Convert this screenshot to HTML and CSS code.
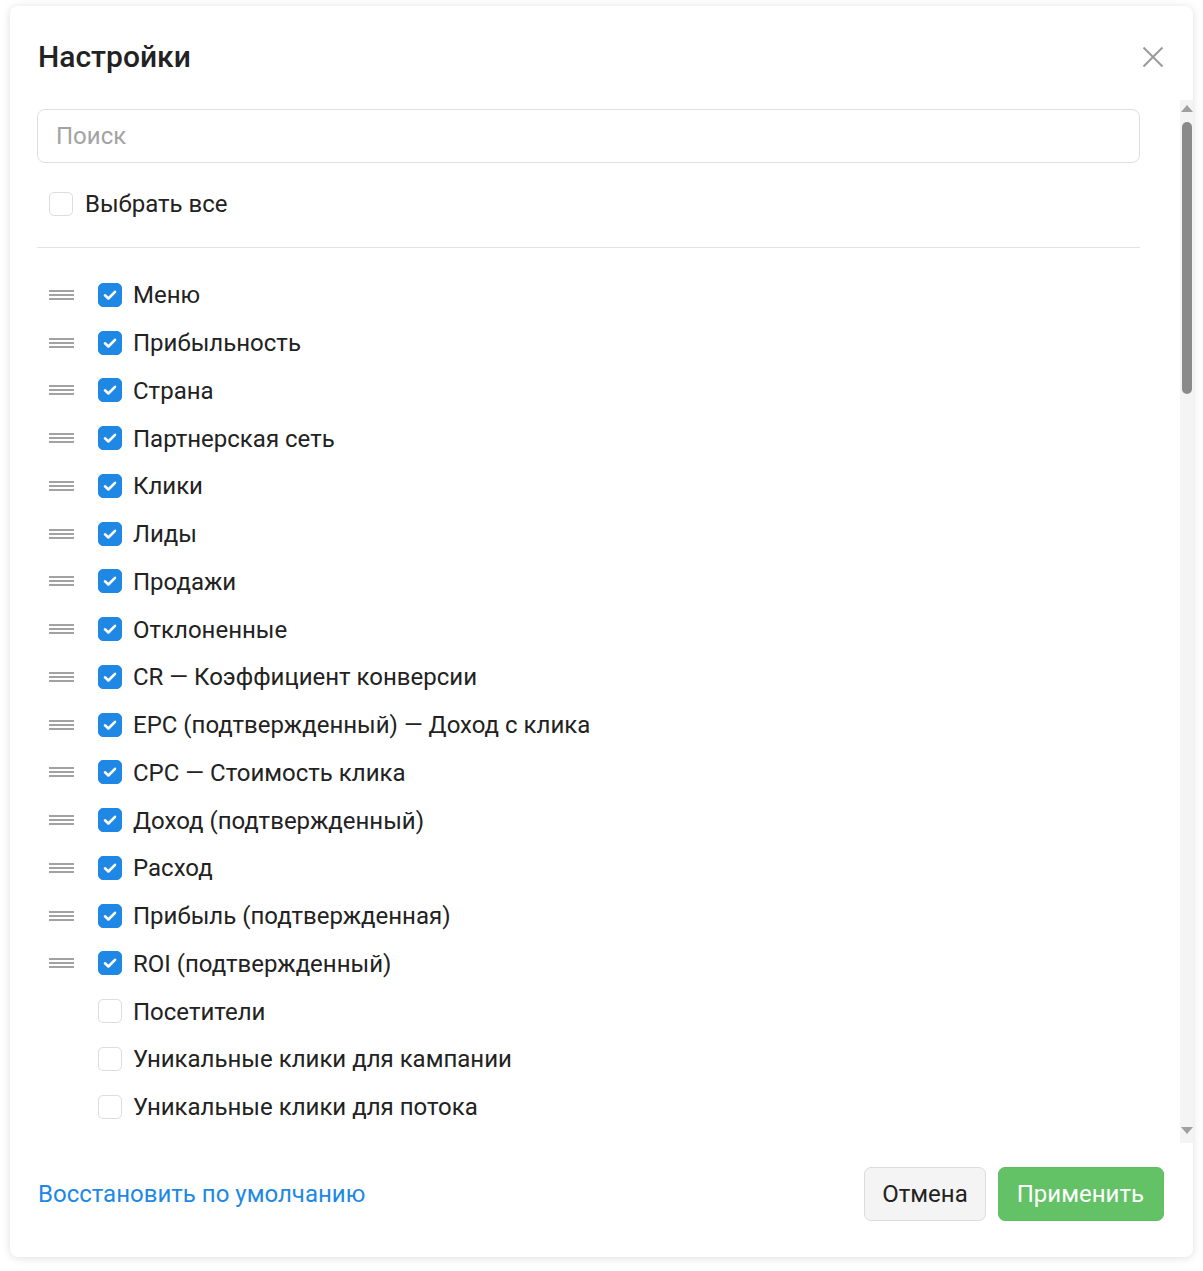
FILE: index.html
```html
<!DOCTYPE html>
<html lang="ru">
<head>
<meta charset="utf-8">
<title>Настройки</title>
<link rel="stylesheet" href="styles.css">
</head>
<body>
<div class="modal">
  <div class="header">
    <h1 class="title">Настройки</h1>
    <button class="close" aria-label="Закрыть">
      <svg width="22" height="22" viewBox="0 0 22 22"><path d="M1.5 1.5 L20.5 20.5 M20.5 1.5 L1.5 20.5" stroke="#9a9a9a" stroke-width="2" fill="none"/></svg>
    </button>
  </div>
  <div class="body">
    <div class="content">
      <div class="search">Поиск</div>
      <label class="select-all">
        <span class="cb"></span>
        <span class="label">Выбрать все</span>
      </label>
      <div class="divider"></div>
      <ul class="list">
        <li class="row"><span class="handle"><i></i><i></i><i></i></span><span class="cb on"><svg viewBox="0 0 24 24"><path d="M7 12.3 L10.4 15.5 L17 8.8" /></svg></span><span class="label">Меню</span></li>
        <li class="row"><span class="handle"><i></i><i></i><i></i></span><span class="cb on"><svg viewBox="0 0 24 24"><path d="M7 12.3 L10.4 15.5 L17 8.8" /></svg></span><span class="label">Прибыльность</span></li>
        <li class="row"><span class="handle"><i></i><i></i><i></i></span><span class="cb on"><svg viewBox="0 0 24 24"><path d="M7 12.3 L10.4 15.5 L17 8.8" /></svg></span><span class="label">Страна</span></li>
        <li class="row"><span class="handle"><i></i><i></i><i></i></span><span class="cb on"><svg viewBox="0 0 24 24"><path d="M7 12.3 L10.4 15.5 L17 8.8" /></svg></span><span class="label">Партнерская сеть</span></li>
        <li class="row"><span class="handle"><i></i><i></i><i></i></span><span class="cb on"><svg viewBox="0 0 24 24"><path d="M7 12.3 L10.4 15.5 L17 8.8" /></svg></span><span class="label">Клики</span></li>
        <li class="row"><span class="handle"><i></i><i></i><i></i></span><span class="cb on"><svg viewBox="0 0 24 24"><path d="M7 12.3 L10.4 15.5 L17 8.8" /></svg></span><span class="label">Лиды</span></li>
        <li class="row"><span class="handle"><i></i><i></i><i></i></span><span class="cb on"><svg viewBox="0 0 24 24"><path d="M7 12.3 L10.4 15.5 L17 8.8" /></svg></span><span class="label">Продажи</span></li>
        <li class="row"><span class="handle"><i></i><i></i><i></i></span><span class="cb on"><svg viewBox="0 0 24 24"><path d="M7 12.3 L10.4 15.5 L17 8.8" /></svg></span><span class="label">Отклоненные</span></li>
        <li class="row"><span class="handle"><i></i><i></i><i></i></span><span class="cb on"><svg viewBox="0 0 24 24"><path d="M7 12.3 L10.4 15.5 L17 8.8" /></svg></span><span class="label">CR — Коэффициент конверсии</span></li>
        <li class="row"><span class="handle"><i></i><i></i><i></i></span><span class="cb on"><svg viewBox="0 0 24 24"><path d="M7 12.3 L10.4 15.5 L17 8.8" /></svg></span><span class="label">EPC (подтвержденный) — Доход с клика</span></li>
        <li class="row"><span class="handle"><i></i><i></i><i></i></span><span class="cb on"><svg viewBox="0 0 24 24"><path d="M7 12.3 L10.4 15.5 L17 8.8" /></svg></span><span class="label">CPC — Стоимость клика</span></li>
        <li class="row"><span class="handle"><i></i><i></i><i></i></span><span class="cb on"><svg viewBox="0 0 24 24"><path d="M7 12.3 L10.4 15.5 L17 8.8" /></svg></span><span class="label">Доход (подтвержденный)</span></li>
        <li class="row"><span class="handle"><i></i><i></i><i></i></span><span class="cb on"><svg viewBox="0 0 24 24"><path d="M7 12.3 L10.4 15.5 L17 8.8" /></svg></span><span class="label">Расход</span></li>
        <li class="row"><span class="handle"><i></i><i></i><i></i></span><span class="cb on"><svg viewBox="0 0 24 24"><path d="M7 12.3 L10.4 15.5 L17 8.8" /></svg></span><span class="label">Прибыль (подтвержденная)</span></li>
        <li class="row"><span class="handle"><i></i><i></i><i></i></span><span class="cb on"><svg viewBox="0 0 24 24"><path d="M7 12.3 L10.4 15.5 L17 8.8" /></svg></span><span class="label">ROI (подтвержденный)</span></li>
        <li class="row"><span class="handle empty"></span><span class="cb"></span><span class="label">Посетители</span></li>
        <li class="row"><span class="handle empty"></span><span class="cb"></span><span class="label">Уникальные клики для кампании</span></li>
        <li class="row"><span class="handle empty"></span><span class="cb"></span><span class="label">Уникальные клики для потока</span></li>
      </ul>
    </div>
    <div class="scrollbar">
      <span class="arrow up"></span>
      <div class="track"><div class="thumb"></div></div>
      <span class="arrow down"></span>
    </div>
  </div>
  <div class="footer">
    <a class="reset" href="#">Восстановить по умолчанию</a>
    <div class="actions">
      <button class="btn cancel">Отмена</button>
      <button class="btn apply">Применить</button>
    </div>
  </div>
</div>
</body>
</html>
```

FILE: styles.css
```css
* { box-sizing: border-box; }

html, body {
  margin: 0;
  padding: 0;
  background: #ffffff;
}

body {
  font-family: Roboto, "Noto Sans", "Liberation Sans", sans-serif;
  color: #222222;
  padding: 6px 10px 14px 10px;
}

.modal {
  width: 1183px;
  height: 1251px;
  background: #ffffff;
  border-radius: 8px;
  box-shadow: 0 1px 8px rgba(0, 0, 0, 0.13);
  display: flex;
  flex-direction: column;
  overflow: hidden;
}

.header {
  height: 94px;
  flex: none;
  display: flex;
  justify-content: space-between;
  align-items: flex-start;
  padding: 33px 29px 0 28px;
}

.title {
  margin: 0;
  font-size: 30px;
  font-weight: 500;
  line-height: 36px;
  color: #222222;
}

.close {
  border: 0;
  background: transparent;
  padding: 0;
  margin-top: 7px;
  width: 22px;
  height: 22px;
  cursor: pointer;
}
.close svg { display: block; }

.body {
  height: 1043px;
  flex: none;
  display: flex;
}

.content {
  flex: 1;
  overflow: hidden;
  padding: 9px 40px 0 27px;
}

.search {
  height: 54px;
  border: 1px solid #dedede;
  border-radius: 8px;
  padding: 0 18px;
  font-size: 24px;
  line-height: 52px;
  color: #a3a3a3;
}

.select-all {
  display: flex;
  align-items: center;
  height: 48px;
  margin-top: 17px;
  padding-left: 12px;
  gap: 12px;
}
.select-all .label { padding-top: 0; }

.divider {
  height: 1px;
  background: #e3e3e3;
  margin-top: 19px;
}

.list {
  list-style: none;
  margin: 23px 0 0 0;
  padding: 0;
}

.row {
  display: flex;
  align-items: center;
  height: 47.76px;
  padding-left: 12px;
}

.handle {
  width: 25px;
  height: 10px;
  display: flex;
  flex-direction: column;
  justify-content: space-between;
  margin-right: 24px;
  flex: none;
}
.handle i {
  display: block;
  height: 2px;
  background: #a2a2a2;
}
.handle.empty { visibility: hidden; }

.cb {
  width: 24px;
  height: 24px;
  flex: none;
  border-radius: 5px;
  border: 1px solid #dddddd;
  background: #ffffff;
}
.cb.on {
  background: #1f88e5;
  border-color: #1f88e5;
  display: flex;
  align-items: center;
  justify-content: center;
}
.cb svg {
  width: 24px;
  height: 24px;
  flex: none;
}
.cb svg path {
  fill: none;
  stroke: #ffffff;
  stroke-width: 2.6;
  stroke-linecap: round;
  stroke-linejoin: round;
}

.row .cb { margin-right: 11px; }

.label {
  font-size: 24px;
  line-height: 30px;
  color: #222222;
  white-space: nowrap;
  padding-top: 1px;
}

.scrollbar {
  width: 13px;
  flex: none;
  background: #f4f4f4;
  display: flex;
  flex-direction: column;
  align-items: center;
  padding: 4px 0 4px;
}
.arrow {
  width: 0;
  height: 0;
  border-left: 6px solid transparent;
  border-right: 6px solid transparent;
  flex: none;
}
.arrow.up { border-bottom: 7px solid #a0a0a0; margin-top: 1px; }
.arrow.down { border-top: 7px solid #a0a0a0; margin-bottom: 5px; }
.track {
  flex: 1;
  width: 100%;
  padding: 10px 1px 0 2px;
}
.thumb {
  height: 272px;
  width: 10px;
  border-radius: 5px;
  background: #8a8a8a;
}

.footer {
  flex: 1;
  display: flex;
  justify-content: space-between;
  align-items: flex-start;
  padding: 24px 29px 0 28px;
}

.reset {
  color: #1e88e5;
  text-decoration: none;
  font-size: 24px;
  line-height: 54px;
}

.actions {
  display: flex;
  gap: 12px;
}

.btn {
  height: 54px;
  font-family: inherit;
  font-size: 24px;
  border-radius: 7px;
  padding: 0 17px;
  cursor: pointer;
}
.cancel {
  background: #f4f4f4;
  border: 1px solid #dcdcdc;
  color: #222222;
}
.apply {
  background: #63c266;
  border: 1px solid #5fbf62;
  color: #ffffff;
  padding: 0 19px 0 18px;
}
```
